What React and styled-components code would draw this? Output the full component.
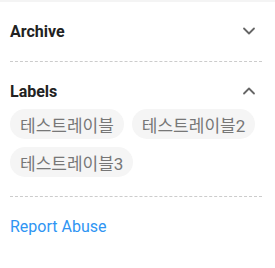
import React from "react";
import styled, { createGlobalStyle } from "styled-components";

const GlobalStyle = createGlobalStyle`
  body {
    margin: 0;
    background: #ffffff;
    font-family: Roboto, "Noto Sans CJK KR", sans-serif;
  }
`;

const Sidebar = styled.aside`
  width: 275px;
  border-top: 2px solid #f4f4f4;
  box-sizing: border-box;
  padding: 0 13px 0 10px;
`;

const Section = styled.section`
  padding: 19px 0 ${(p) => (p.$tight ? "19px" : "20px")};
  border-bottom: 1px dashed #cccccc;
`;

const Header = styled.div`
  display: flex;
  align-items: center;
  justify-content: space-between;
  height: 20px;
`;

const Title = styled.h3`
  margin: 0;
  font-size: 16px;
  font-weight: 700;
  color: #222222;
`;

const Chevron = styled.svg`
  width: 14px;
  height: 14px;
  margin-right: 6px;
  color: #666666;
`;

const ChipList = styled.div`
  display: flex;
  flex-wrap: wrap;
  gap: 8px;
  margin-top: 8px;
`;

const Chip = styled.span`
  display: inline-flex;
  align-items: center;
  height: 30px;
  padding: 0 10px;
  box-sizing: border-box;
  border-radius: 15px;
  background: #f5f5f5;
  color: #777777;
  font-size: 17px;
  font-family: Roboto, "Noto Sans CJK KR", sans-serif;
`;

const Footer = styled.div`
  padding: 20px 0;
`;

const Link = styled.a`
  font-size: 16px;
  color: #2f95f3;
  text-decoration: none;
  line-height: 20px;
`;

const Arrow = ({ up }) => (
  <Chevron viewBox="0 0 14 14" fill="none">
    <path
      d={up ? "M2 9.5 L7 4.5 L12 9.5" : "M2 4.5 L7 9.5 L12 4.5"}
      stroke="currentColor"
      strokeWidth="1.8"
      strokeLinecap="round"
      strokeLinejoin="round"
    />
  </Chevron>
);

const labels = ["테스트레이블", "테스트레이블2", "테스트레이블3"];

const App = () => {
  return (
    <>
      <GlobalStyle />
      <Sidebar>
        <Section>
          <Header>
            <Title>Archive</Title>
            <Arrow />
          </Header>
        </Section>
        <Section $tight>
          <Header>
            <Title>Labels</Title>
            <Arrow up />
          </Header>
          <ChipList>
            {labels.map((l) => (
              <Chip key={l}>{l}</Chip>
            ))}
          </ChipList>
        </Section>
        <Footer>
          <Link href="#">Report Abuse</Link>
        </Footer>
      </Sidebar>
    </>
  );
};

export default App;
